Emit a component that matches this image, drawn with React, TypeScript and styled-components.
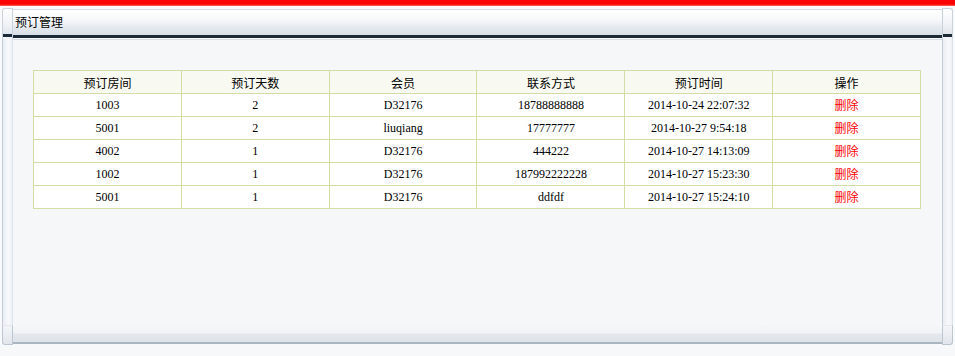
import React from 'react';
import styled, { createGlobalStyle } from 'styled-components';

interface Booking {
  room: string;
  days: number;
  member: string;
  contact: string;
  time: string;
}

const bookings: Booking[] = [
  { room: '1003', days: 2, member: 'D32176', contact: '18788888888', time: '2014-10-24 22:07:32' },
  { room: '5001', days: 2, member: 'liuqiang', contact: '17777777', time: '2014-10-27 9:54:18' },
  { room: '4002', days: 1, member: 'D32176', contact: '444222', time: '2014-10-27 14:13:09' },
  { room: '1002', days: 1, member: 'D32176', contact: '187992222228', time: '2014-10-27 15:23:30' },
  { room: '5001', days: 1, member: 'D32176', contact: 'ddfdf', time: '2014-10-27 15:24:10' },
];

const columns = ['预订房间', '预订天数', '会员', '联系方式', '预订时间', '操作'];

const GlobalStyle = createGlobalStyle`
  html, body {
    margin: 0;
    padding: 0;
    background: #f6f8fa;
  }
  body {
    font-family: "Liberation Serif", "Noto Sans CJK SC", serif;
    font-size: 12px;
    color: #000;
  }
`;

const TopStripe = styled.div`
  height: 6px;
  background: linear-gradient(#ff0000 0%, #ff0000 70%, #ff6a6a 100%);
`;

const Panel = styled.div`
  padding: 2px 2px 0;
  background: #f7f9fb;
`;

const Row = styled.div`
  display: flex;
`;

const HeadCap = styled.div<{ side: 'left' | 'right' }>`
  width: 11px;
  height: 31px;
  box-sizing: border-box;
  border: 1px solid #c9d1db;
  border-bottom: none;
  border-radius: ${(p) => (p.side === 'left' ? '3px 0 0 0' : '0 3px 0 0')};
  background: linear-gradient(#ffffff 0%, #eef1f5 55%, #dfe5ec 85%, #1c2a38 85%, #1c2a38 92%, #f2f4f7 92%);
`;

const HeadBar = styled.div`
  flex: 1;
  height: 29px;
  box-sizing: border-box;
  margin-top: 1px;
  padding: 3px 0 0 2px;
  border-top: 1px solid #d4dae2;
  border-bottom: 3px solid #1c2a38;
  background: linear-gradient(#ffffff 0%, #f6f8fa 40%, #e4e9ef 70%, #d9dfe7 100%);
  font-family: "Noto Sans CJK SC", sans-serif;
  font-size: 12px;
  line-height: 18px;
`;

const Rail = styled.div`
  width: 11px;
  box-sizing: border-box;
  border-left: 1px solid #c3cbd6;
  border-right: 1px solid #dde3ea;
  background: linear-gradient(90deg, #e9edf2, #f7f9fb 60%, #eef1f5);
`;

const Content = styled.div`
  flex: 1;
  height: 286px;
  box-sizing: border-box;
  padding: 30px 21px 0 20px;
  background: #f5f7f9;
  border-top: 1px solid #d8dee6;
`;

const FootCap = styled.div<{ side: 'left' | 'right' }>`
  width: 11px;
  height: 20px;
  box-sizing: border-box;
  border: 1px solid #bcc5d0;
  border-top-color: #e4e8ee;
  border-radius: ${(p) => (p.side === 'left' ? '0 0 0 3px' : '0 0 3px 0')};
  background: linear-gradient(#f3f5f8, #e1e6ec);
`;

const FootBar = styled.div`
  flex: 1;
  height: 19px;
  box-sizing: border-box;
  border-bottom: 2px solid #aab5c2;
  background: linear-gradient(#f5f7f9 0%, #f1f3f6 45%, #e3e7ec 55%, #dfe4ea 100%);
`;

const Table = styled.table`
  width: 100%;
  border-collapse: collapse;
  table-layout: fixed;
  background: #ffffff;
`;

const Th = styled.th`
  height: 22px;
  padding: 0;
  border: 1px solid #d3dba6;
  background: #f8f9f0;
  font-family: "Noto Sans CJK SC", sans-serif;
  font-weight: normal;
  font-size: 12px;
  text-align: center;
`;

const Td = styled.td`
  height: 22px;
  padding: 0;
  border: 1px solid #d3dba6;
  text-align: center;
  font-size: 12px;
`;

const DeleteLink = styled.a`
  color: #ff0000;
  font-family: "Noto Sans CJK SC", sans-serif;
  text-decoration: none;
  cursor: pointer;
`;

const App: React.FC = () => (
  <>
    <GlobalStyle />
    <TopStripe />
    <Panel>
      <Row>
        <HeadCap side="left" />
        <HeadBar>预订管理</HeadBar>
        <HeadCap side="right" />
      </Row>
      <Row>
        <Rail />
        <Content>
          <Table>
            <thead>
              <tr>
                {columns.map((c) => (
                  <Th key={c}>{c}</Th>
                ))}
              </tr>
            </thead>
            <tbody>
              {bookings.map((b, i) => (
                <tr key={i}>
                  <Td>{b.room}</Td>
                  <Td>{b.days}</Td>
                  <Td>{b.member}</Td>
                  <Td>{b.contact}</Td>
                  <Td>{b.time}</Td>
                  <Td>
                    <DeleteLink>删除</DeleteLink>
                  </Td>
                </tr>
              ))}
            </tbody>
          </Table>
        </Content>
        <Rail />
      </Row>
      <Row>
        <FootCap side="left" />
        <FootBar />
        <FootCap side="right" />
      </Row>
    </Panel>
  </>
);

export default App;
